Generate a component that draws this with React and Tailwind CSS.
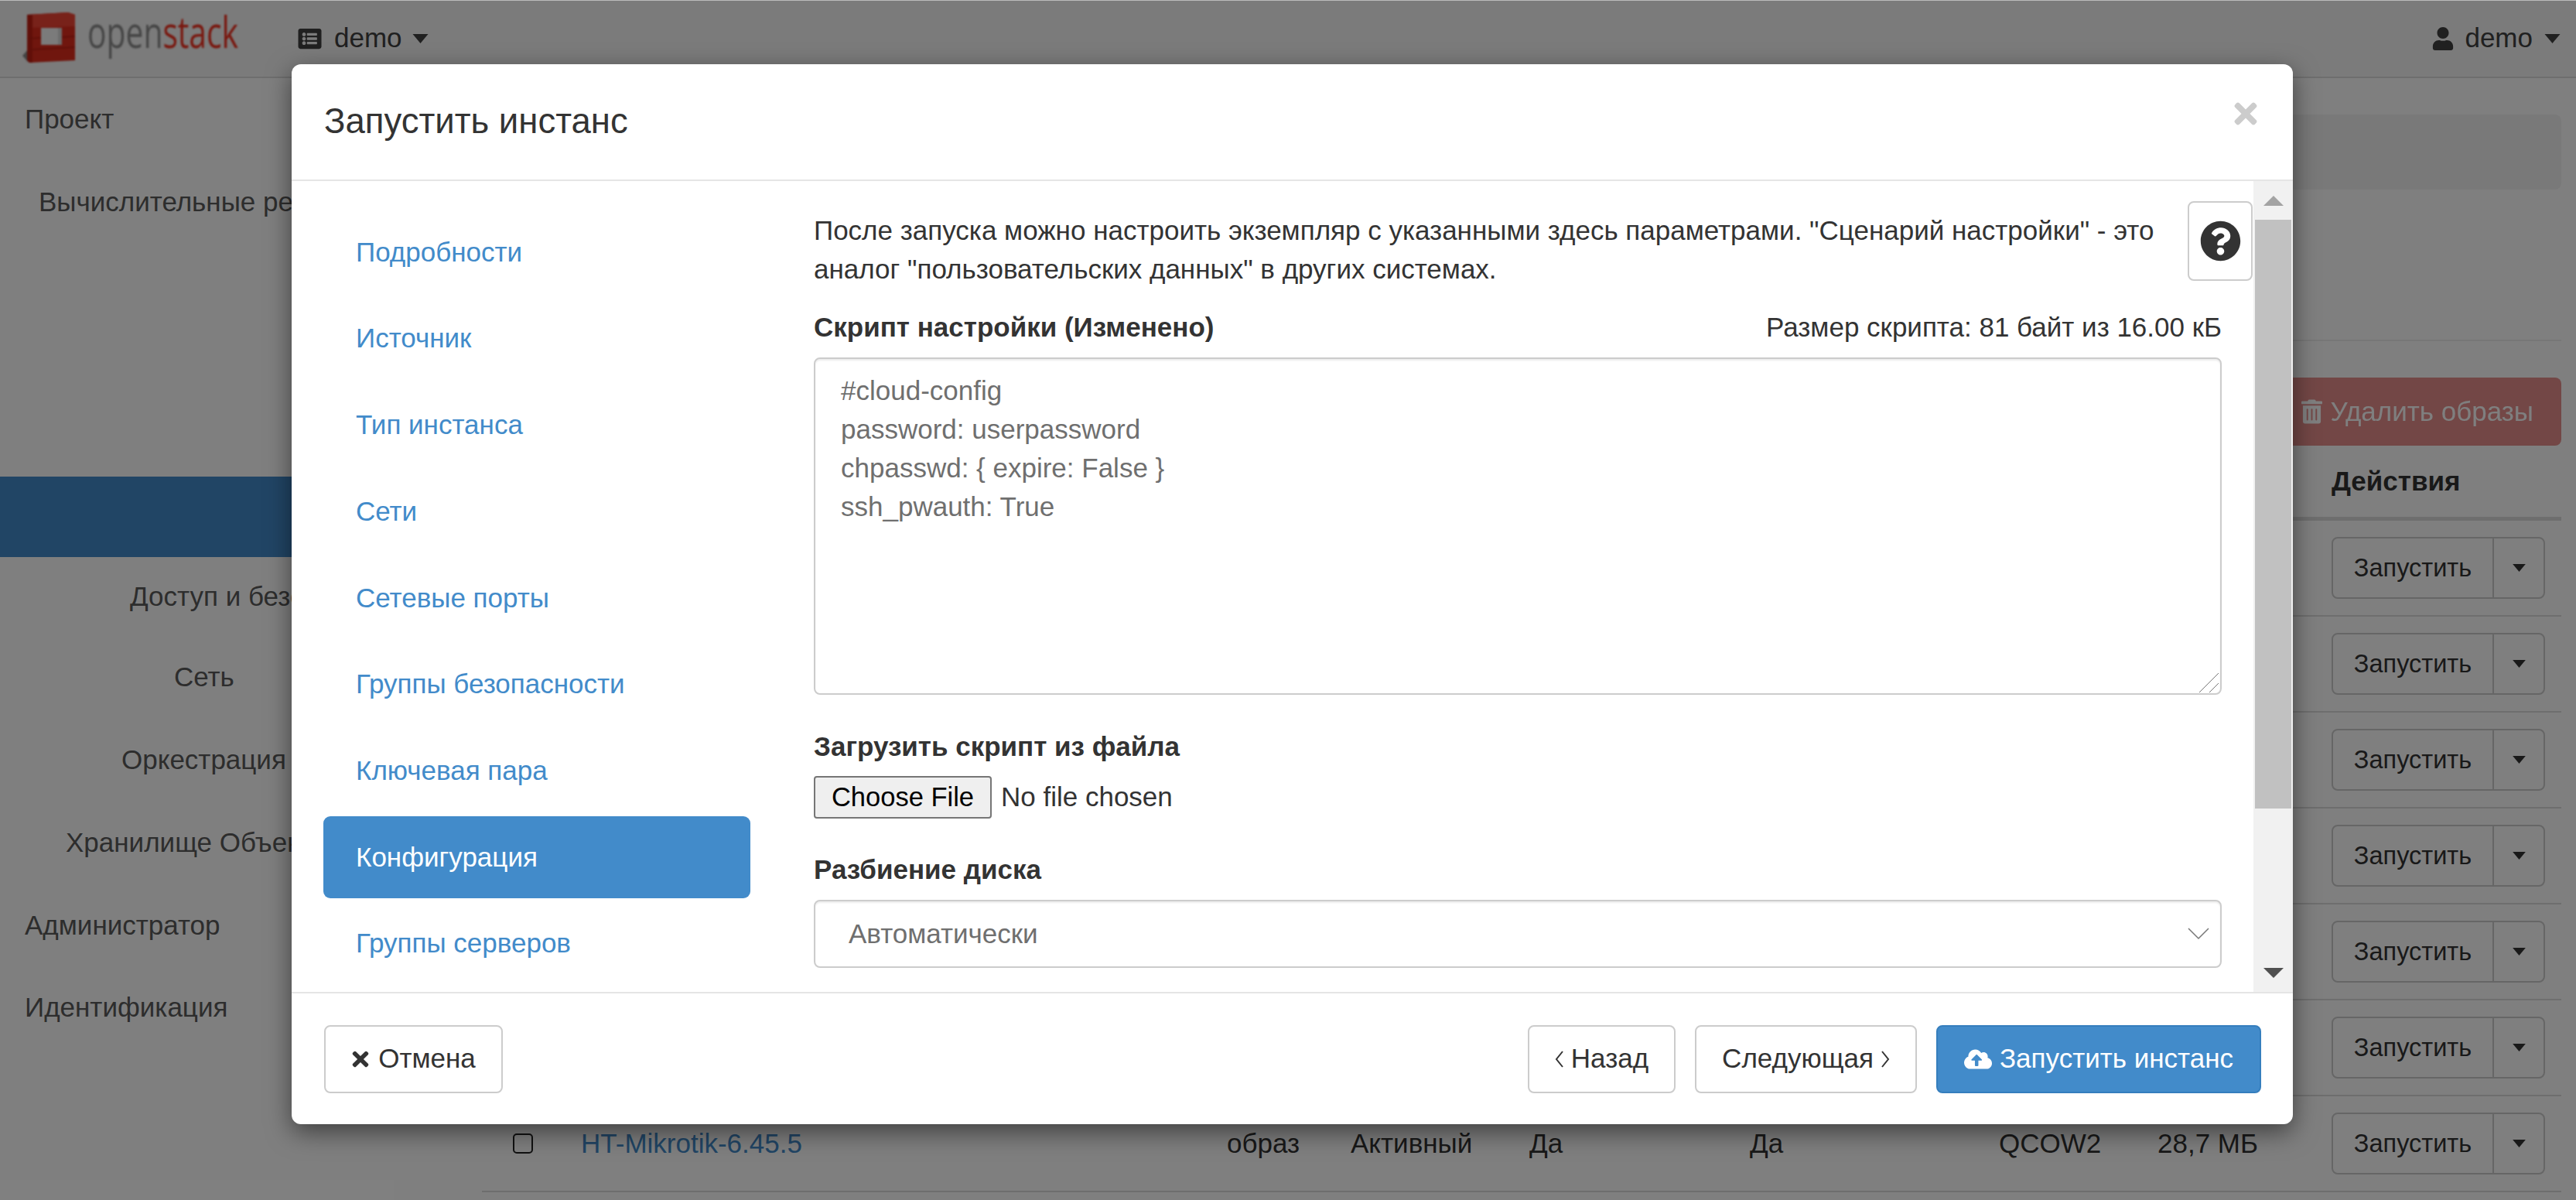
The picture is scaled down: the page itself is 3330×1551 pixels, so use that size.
import { FaListAlt, FaUser, FaTrashAlt, FaQuestionCircle, FaCloudUploadAlt, FaTimes } from 'react-icons/fa'

const sidebarRows = [
  { label: 'Проект', className: 'h-[106.5px] pl-[32px]' },
  { label: 'Вычислительные ресурсы', className: 'h-[106.5px] pl-[50px]' },
  { label: '', className: 'h-[100.7px]' },
  { label: '', className: 'h-[100.7px]' },
  { label: '', className: 'h-[100.7px]' },
  { label: '', className: 'h-[104px] bg-[#428bca]' },
  { label: 'Доступ и безопасность', className: 'h-[102px] pl-[168px]' },
  { label: 'Сеть', className: 'h-[107px] pl-[225px]' },
  { label: 'Оркестрация', className: 'h-[107px] pl-[157px]' },
  { label: 'Хранилище Объектов', className: 'h-[107px] pl-[85px]' },
  { label: 'Администратор', className: 'h-[106px] pl-[32px]' },
  { label: 'Идентификация', className: 'h-[106px] pl-[32px]' },
]

const wizardSteps = [
  'Подробности',
  'Источник',
  'Тип инстанса',
  'Сети',
  'Сетевые порты',
  'Группы безопасности',
  'Ключевая пара',
  'Конфигурация',
  'Группы серверов',
]

const tableCols = 'grid grid-cols-[128px_835px_160px_231px_285px_322px_205px_225px_297px] items-center'

function Caret({ className }) {
  return (
    <svg className={className} viewBox="0 0 20 12" fill="currentColor">
      <polygon points="0,0 20,0 10,12" />
    </svg>
  )
}

function SplitButton() {
  return (
    <div className="flex h-[80px] w-[276px] rounded-[8px] border-2 border-[#ccc] bg-white text-[32.5px]">
      <div className="flex w-[208px] items-center justify-center border-r-2 border-[#ccc]">Запустить</div>
      <div className="flex flex-1 items-center justify-center">
        <Caret className="h-[10px] w-[19px]" />
      </div>
    </div>
  )
}

function Logo() {
  return (
    <svg className="ml-[28px] h-[72px] w-[290px] blur-[0.8px]" viewBox="0 0 290 72">
      <polygon points="1,58 8,50 8,66" fill="#888" />
      <polygon points="7,5 60,2 69,5 69,64 10,67 7,64" fill="#e02c1c" />
      <polygon points="7,5 60,2 69,5 69,20 7,22" fill="#f04434" />
      <polygon points="7,5 14,5 14,67 10,67 7,64" fill="#c21f12" />
      <path d="M7 36 L25 35 M52 34 L69 33 M14 50 L69 47" stroke="#b81d10" strokeWidth="1.5" />
      <rect x="25" y="22" width="27" height="22" fill="#f6f6f6" />
      <rect x="47" y="22" width="5" height="22" fill="#d8d8d8" />
      <text x="85" y="48" textLength="195" lengthAdjust="spacingAndGlyphs" fontFamily="'Open Sans', sans-serif" fontSize="57" fill="#8c8c8c">
        open<tspan fill="#f2301f">stack</tspan>
      </text>
    </svg>
  )
}

function ImagesPage() {
  return (
    <div className="flex h-full flex-col">
      {/* Navbar */}
      <div className="flex h-[101px] shrink-0 items-center border-b-2 border-[#dcdcdc] bg-[#f6f6f6] text-[#404040]">
        <Logo />
        <FaListAlt className="ml-[65px] h-[30px] w-[35px]" />
        <span className="ml-[14px]">demo</span>
        <Caret className="ml-[13px] h-[12px] w-[21px]" />
        <FaUser className="ml-auto h-[30px] w-[28px]" />
        <span className="ml-[14px]">demo</span>
        <Caret className="ml-[15px] mr-[20px] h-[12px] w-[21px]" />
      </div>

      <div className="flex min-h-0 flex-1">
        {/* Sidebar */}
        <div className="flex w-[623px] shrink-0 flex-col text-[#5a5a5a]">
          {sidebarRows.map((row, i) => (
            <div key={i} className={`flex shrink-0 items-center whitespace-nowrap ${row.className}`}>
              {row.label}
            </div>
          ))}
        </div>

        {/* Main column */}
        <div className="min-w-0 flex-1 pr-[19px]">
          <div className="mt-[47px] h-[97px] rounded-[8px] bg-[#f3f3f3]" />
          <div className="h-[196px] border-b-2 border-[#eee]" />
          <div className="mt-[47px] flex h-[88px] justify-end">
            <div className="flex w-[420px] items-center justify-end gap-[10px] rounded-[8px] bg-[#d9534f] pr-[36px] text-white opacity-65">
              <FaTrashAlt className="h-[32px] w-[27px]" />
              Удалить образы
            </div>
          </div>
          <div className={`${tableCols} h-[97px] border-b-[5px] border-[#ddd] font-bold`}>
            <div className="col-start-9">Действия</div>
          </div>
          {[0, 1, 2, 3, 4, 5].map(i => (
            <div key={i} className={`${tableCols} h-[124px] border-b-2 border-[#ddd]`}>
              <div className="col-start-9">
                <SplitButton />
              </div>
            </div>
          ))}
          <div className={`${tableCols} h-[124px] border-b-2 border-[#ddd]`}>
            <div className="pl-[40px]">
              <input type="checkbox" readOnly className="block h-[26px] w-[26px] appearance-none rounded-[5px] border-2 border-[#222] bg-white" />
            </div>
            <div className="text-[#428bca]">HT-Mikrotik-6.45.5</div>
            <div>образ</div>
            <div>Активный</div>
            <div>Да</div>
            <div>Да</div>
            <div>QCOW2</div>
            <div>28,7 МБ</div>
            <SplitButton />
          </div>
        </div>
      </div>
    </div>
  )
}

function ConfigurationForm() {
  return (
    <div className="w-[1820px] shrink-0 pt-[39px]">
      <p className="w-[1765px] leading-[50px]">
        После запуска можно настроить экземпляр с указанными здесь параметрами. "Сценарий настройки" - это аналог "пользовательских данных" в других системах.
      </p>
      <div className="mt-[25px] flex justify-between leading-[50px]">
        <span className="font-bold">Скрипт настройки (Изменено)</span>
        <span>Размер скрипта: 81 байт из 16.00 кБ</span>
      </div>
      <div className="relative mt-[14px]">
        <textarea
          readOnly
          className="block h-[436px] w-full resize-none rounded-[8px] border-2 border-[#ccc] px-[33px] py-[16px] leading-[50px] text-[#6f6f6f] shadow-[inset_0_2px_2px_rgba(0,0,0,0.075)] outline-none"
          defaultValue={'#cloud-config\npassword: userpassword\nchpasswd: { expire: False }\nssh_pwauth: True'}
        />
        {/* Resize grip */}
        <svg className="absolute bottom-[2px] right-[3px] h-[26px] w-[26px]" viewBox="0 0 26 26" fill="none" stroke="#555" strokeWidth="0.8">
          <path d="M25 0 L0 25 M25 13 L13 25" />
        </svg>
      </div>
      <div className="mt-[42px] font-bold leading-[50px]">Загрузить скрипт из файла</div>
      <div className="mt-[13px] flex h-[55px] items-center">
        <button className="h-full w-[230px] rounded-[4px] border-2 border-[#767676] bg-[#efefef] text-[34.5px] text-black">Choose File</button>
        <span className="ml-[12px]">No file chosen</span>
      </div>
      <div className="mt-[41px] font-bold leading-[50px]">Разбиение диска</div>
      <div className="mt-[14px] flex h-[88px] items-center justify-between rounded-[8px] border-2 border-[#ccc] pl-[43px] pr-[14px] text-[#6f6f6f] shadow-[inset_0_2px_2px_rgba(0,0,0,0.075)]">
        Автоматически
        <svg className="h-[16px] w-[28px]" viewBox="0 0 28 16" fill="none" stroke="#777" strokeWidth="1.5">
          <polyline points="1,1 14,14 27,1" />
        </svg>
      </div>
    </div>
  )
}

function LaunchModal() {
  return (
    <div className="absolute left-[377px] top-[83px] flex h-[1370px] w-[2587px] flex-col rounded-[12px] bg-white shadow-[0_10px_32px_rgba(0,0,0,0.5)]">
      <div className="flex h-[151px] shrink-0 items-center justify-between border-b-2 border-[#e5e5e5] pl-[42px] pr-[43px]">
        <span className="text-[45.5px]">Запустить инстанс</span>
        <FaTimes className="mb-[22px] h-[42px] w-[36px] text-[#ccc]" />
      </div>

      <div className="relative flex min-h-0 flex-1">
        {/* Wizard steps */}
        <div className="flex w-[675px] shrink-0 flex-col gap-[5.7px] pl-[41px] pt-[39px]">
          {wizardSteps.map(step => (
            <div
              key={step}
              className={`flex h-[106px] w-[552px] shrink-0 items-center rounded-[9px] px-[42px] ${
                step === 'Конфигурация' ? 'bg-[#428bca] text-white' : 'text-[#428bca]'
              }`}
            >
              {step}
            </div>
          ))}
        </div>

        <ConfigurationForm />

        {/* Help button */}
        <div className="absolute left-[2451px] top-[26px] flex h-[103px] w-[84px] items-center justify-center rounded-[8px] border-2 border-[#ccc] bg-white">
          <FaQuestionCircle className="h-[53px] w-[53px]" />
        </div>

        {/* Scrollbar */}
        <div className="ml-auto flex w-[51px] shrink-0 flex-col bg-[#f1f1f1]">
          <div className="flex h-[50px] shrink-0 items-center justify-center">
            <svg className="h-[13px] w-[26px]" viewBox="0 0 26 13" fill="#a3a3a3">
              <polygon points="13,0 26,13 0,13" />
            </svg>
          </div>
          <div className="mx-[2px] h-[761px] shrink-0 bg-[#c1c1c1]" />
          <div className="mt-auto flex h-[50px] shrink-0 items-center justify-center">
            <svg className="h-[13px] w-[26px]" viewBox="0 0 26 13" fill="#505050">
              <polygon points="0,0 26,0 13,13" />
            </svg>
          </div>
        </div>
      </div>

      {/* Footer */}
      <div className="flex h-[171px] shrink-0 items-center justify-between border-t-2 border-[#e5e5e5] pl-[42px] pr-[41px]">
        <button className="flex h-[88px] w-[231px] items-center justify-center gap-[11px] rounded-[8px] border-2 border-[#ccc]">
          <FaTimes className="h-[30px] w-[24px]" />
          Отмена
        </button>
        <div className="flex gap-[25px]">
          <button className="flex h-[88px] w-[191px] items-center justify-center gap-[10px] rounded-[8px] border-2 border-[#ccc]">
            <svg className="h-[22px] w-[11px]" viewBox="0 0 11 22" fill="none" stroke="#333" strokeWidth="2">
              <polyline points="10,1 2,11 10,21" />
            </svg>
            Назад
          </button>
          <button className="flex h-[88px] w-[287px] items-center justify-center gap-[10px] rounded-[8px] border-2 border-[#ccc]">
            Следующая
            <svg className="h-[22px] w-[11px]" viewBox="0 0 11 22" fill="none" stroke="#333" strokeWidth="2">
              <polyline points="1,1 9,11 1,21" />
            </svg>
          </button>
          <button className="flex h-[88px] w-[420px] items-center justify-center gap-[10px] rounded-[8px] border-2 border-[#357ebd] bg-[#428bca] text-white">
            <FaCloudUploadAlt className="h-[36px] w-[36px]" />
            Запустить инстанс
          </button>
        </div>
      </div>
    </div>
  )
}

export default function App() {
  return (
    <div className="relative h-[1551px] w-[3330px] overflow-hidden bg-white font-['Liberation_Sans',Arial,sans-serif] text-[35px] text-[#333]">
      <ImagesPage />
      {/* Backdrop */}
      <div className="absolute inset-0 bg-black/50" />
      <div className="absolute inset-x-0 top-0 h-px bg-[#bbb]" />
      <LaunchModal />
    </div>
  )
}
